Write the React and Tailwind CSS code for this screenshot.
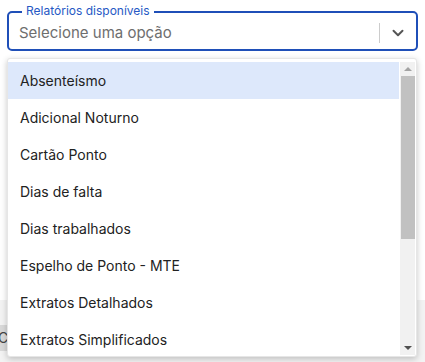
import { ChevronDown } from 'lucide-react';

const reports = [
    'Absenteísmo',
    'Adicional Noturno',
    'Cartão Ponto',
    'Dias de falta',
    'Dias trabalhados',
    'Espelho de Ponto - MTE',
    'Extratos Detalhados',
    'Extratos Simplificados',
];

const App = () => {
    return (
        <div className="relative w-[425px] h-[362px] bg-white overflow-hidden font-['Inter',sans-serif]">
            {/* select */}
            <div className="pt-[11px] px-[7px]">
                <div className="relative h-[40px] border-2 border-[#1f4fb8] rounded-[5px] flex items-center">
                    <span className="absolute -top-[10px] left-[13px] px-[4px] bg-white text-[12px] leading-[16px] text-[#2658c4]">
                        Relatórios disponíveis
                    </span>
                    <span className="flex-1 pl-[10px] pt-[5px] text-[15px] text-[#6e6e6e]">Selecione uma opção</span>
                    <div className="w-px h-[20px] bg-[#cccccc] mt-[3px]" />
                    <div className="w-[36px] flex justify-center pt-[3px]">
                        <ChevronDown size={18} strokeWidth={2.6} className="text-[#555555]" />
                    </div>
                </div>
            </div>

            {/* page behind the menu */}
            <div className="mt-[249px] h-[62px] bg-[#f3f3f3] pt-[25px]">
                <div className="w-[80px] h-[26px] -ml-[2px] bg-[#d9d9d9] text-[14px] leading-[26px] text-[#444444]">Cancelar</div>
            </div>

            {/* dropdown menu */}
            <div className="absolute left-[7px] top-[58px] w-[410px] h-[299px] bg-white rounded-[3px] shadow-[0_2px_6px_rgba(0,0,0,0.22)] border border-[#e6e6e6] overflow-hidden">
                <ul className="pt-[3px] pr-[17px]">
                    {reports.map((r, i) => (
                        <li
                            key={r}
                            className={`h-[37px] flex items-center pl-[12px] text-[14px] text-[#222222] ${i === 0 ? 'bg-[#dde8fb]' : ''}`}
                        >
                            {r}
                        </li>
                    ))}
                </ul>

                {/* scrollbar */}
                <div className="absolute right-[1px] top-[3px] bottom-[1px] w-[15px] bg-[#f1f1f1] flex flex-col items-center">
                    <div className="h-[14px] flex items-center justify-center">
                        <div className="w-0 h-0 border-l-[4px] border-r-[4px] border-b-[4px] border-l-transparent border-r-transparent border-b-[#a3a3a3]" />
                    </div>
                    <div className="w-[14px] h-[163px] bg-[#c1c1c1]" />
                    <div className="flex-1" />
                    <div className="h-[14px] flex items-center justify-center">
                        <div className="w-0 h-0 border-l-[4px] border-r-[4px] border-t-[4px] border-l-transparent border-r-transparent border-t-[#505050]" />
                    </div>
                </div>
            </div>
        </div>
    );
};

export default App;
